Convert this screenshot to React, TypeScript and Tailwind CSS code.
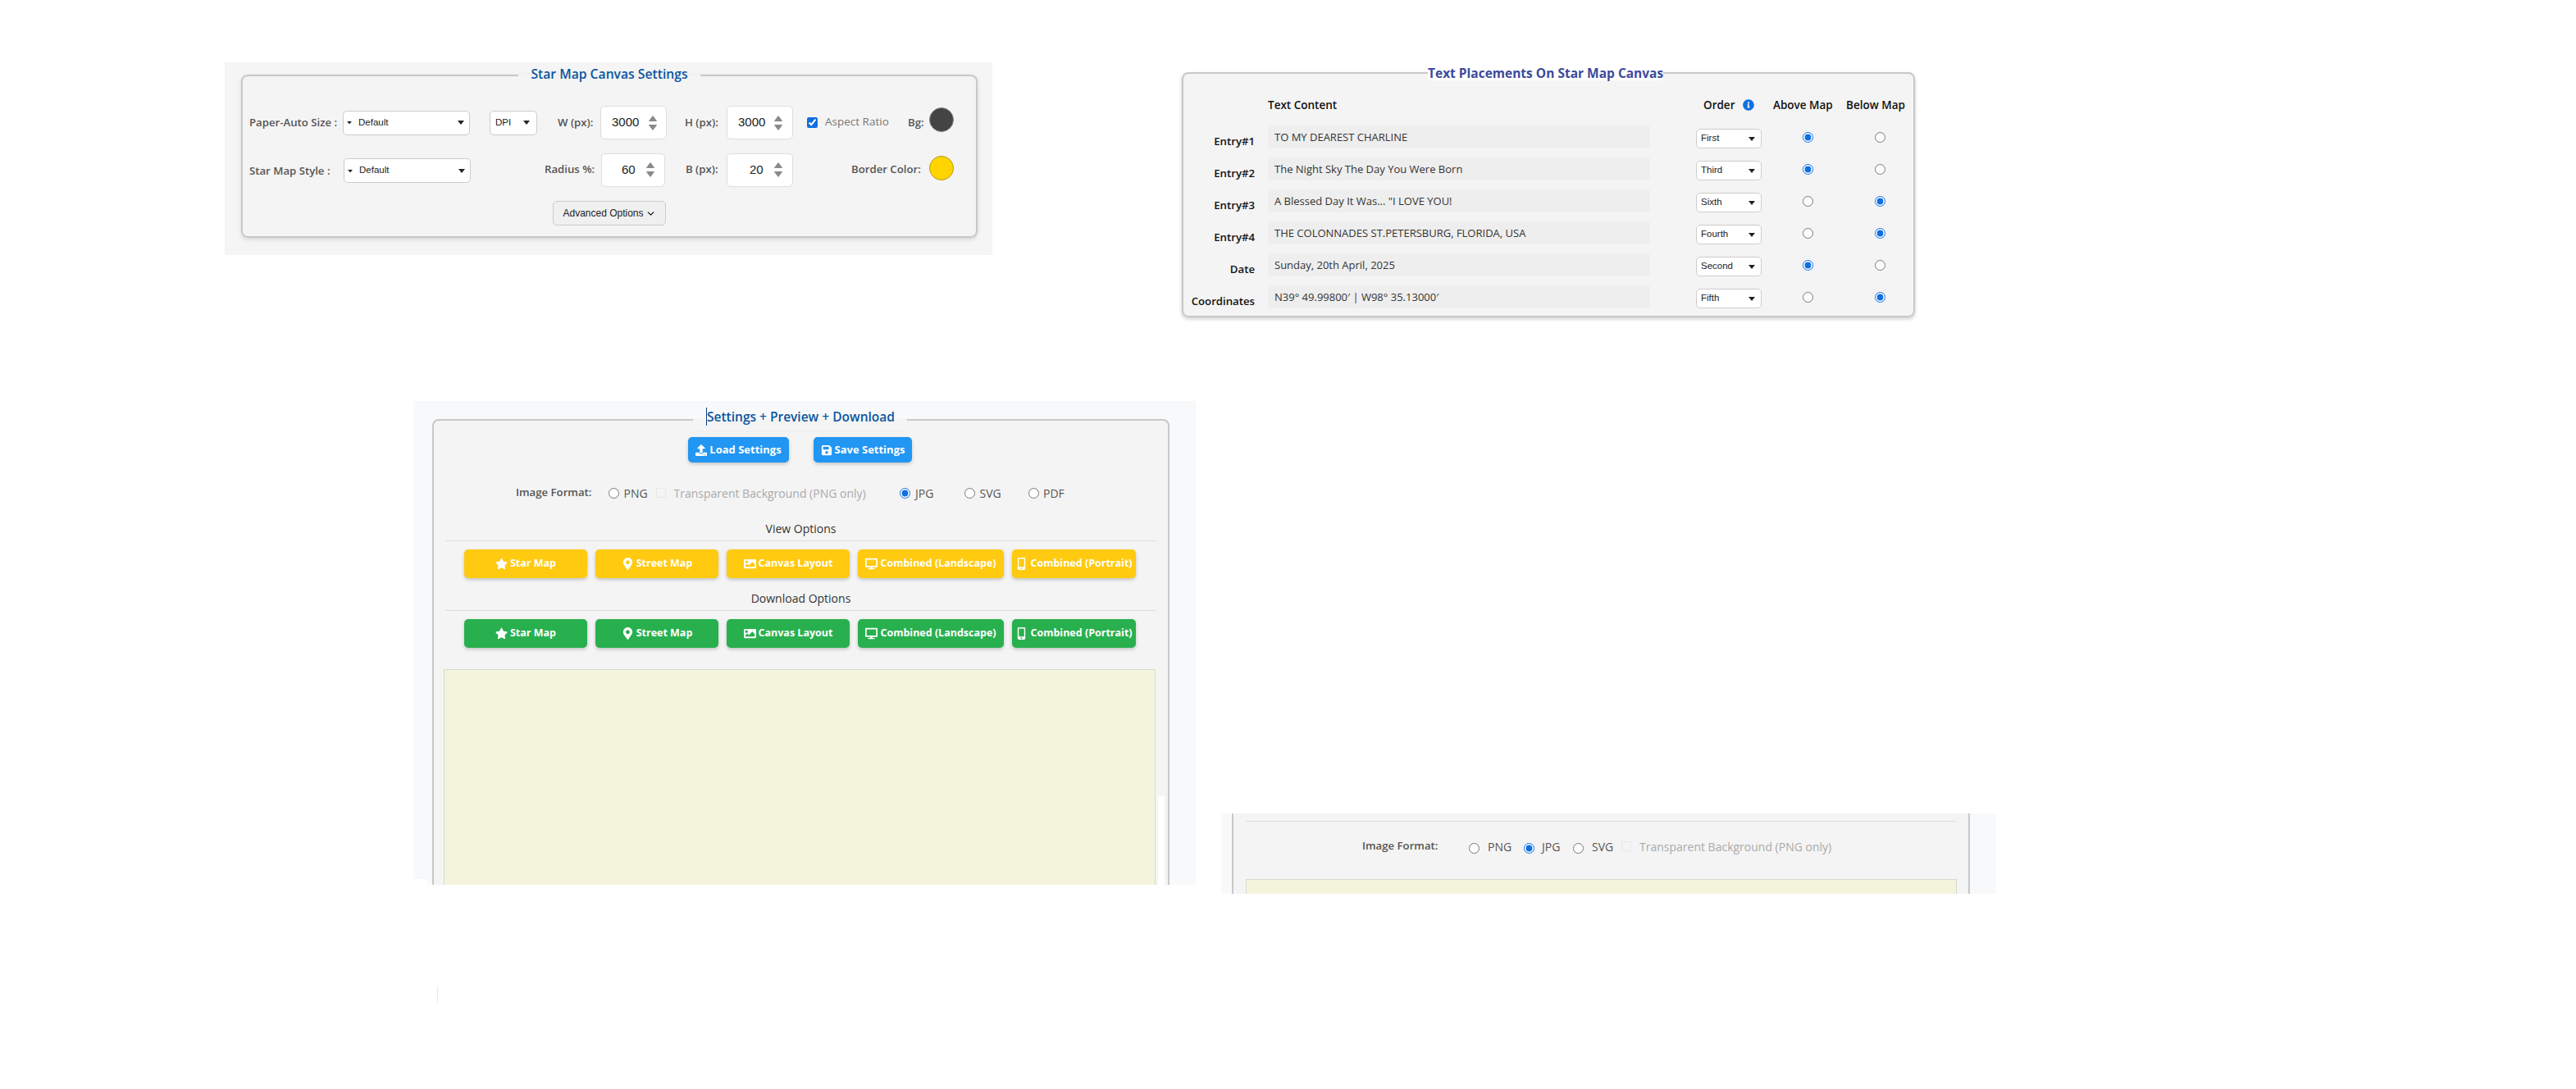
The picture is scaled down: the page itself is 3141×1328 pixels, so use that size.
import type { ReactNode } from 'react'
import { ChevronDown } from 'lucide-react'
import { FaDesktop, FaImage, FaInfoCircle, FaMapMarkerAlt, FaMobileAlt, FaSave, FaStar, FaUpload } from 'react-icons/fa'

function Caret({ className = '' }: { className?: string }) {
  return (
    <svg viewBox="0 0 8 5" className={`h-[5px] w-[8px] shrink-0 ${className}`}>
      <path d="M0 0h8L4 5z" fill="#222" />
    </svg>
  )
}

function FakeSelect({ text, className, lead }: { text: string; className: string; lead?: boolean }) {
  return (
    <div className={`flex shrink-0 items-center rounded-[5px] border border-[#ccc] bg-white font-['Liberation_Sans',sans-serif] text-[11.5px] text-[#222] ${className}`}>
      {lead && <Caret className="mr-[7px] scale-75" />}
      <span>{text}</span>
      <Caret className="ml-auto" />
    </div>
  )
}

function Spinner({ value, className }: { value: string; className: string }) {
  return (
    <div className={`flex h-[41px] shrink-0 items-center justify-between rounded-[5px] border border-[#ddd] bg-white font-['Liberation_Sans',sans-serif] text-[15px] text-[#222] ${className}`}>
      <span>{value}</span>
      <svg viewBox="0 0 12 20" className="h-[20px] w-[12px]">
        <path d="M6 1.5 10.5 7.5H1.5zM6 18.5 1.5 12.5H10.5z" fill="#8a8a8a" stroke="#8a8a8a" strokeLinejoin="round" />
      </svg>
    </div>
  )
}

function Label({ children, className }: { children: ReactNode; className: string }) {
  return <span className={`shrink-0 text-[13.2px] font-semibold whitespace-nowrap text-[#555] ${className}`}>{children}</span>
}

function Radio({ name, checked, className = '' }: { name: string; checked?: boolean; className?: string }) {
  return <input type="radio" name={name} defaultChecked={checked} className={`h-[13px] w-[13px] shrink-0 accent-[#0f6fe0] ${className}`} />
}

function FadedBox({ className }: { className: string }) {
  return <input type="checkbox" disabled className={`h-[12px] w-[12px] shrink-0 appearance-none border border-[#e8e8e8] ${className}`} />
}

function CanvasSettings() {
  return (
    <div className="absolute top-[76px] left-[274px] h-[235px] w-[936px] bg-[#f5f5f5] pt-[4px] pl-[20px]">
      <fieldset className="h-[210px] w-[898px] rounded-[8px] border-2 border-[#c8c8c8] bg-[#f4f4f4] shadow-[0_2px_5px_rgba(0,0,0,0.12)]">
        <legend className="mx-auto px-[15px] text-[15.7px] leading-[24px] font-semibold text-[#0b559f]">
          <span className="relative -top-[2px]">Star Map Canvas Settings</span>
        </legend>
        <div className="mt-[25px] flex h-[41px] items-center pl-[8px]">
          <Label className="w-[114px]">Paper-Auto Size :</Label>
          <FakeSelect text="Default" lead className="h-[30px] w-[155px] pr-[6px] pl-[3px]" />
          <FakeSelect text="DPI" className="ml-[24px] h-[30px] w-[58px] pr-[8px] pl-[6px]" />
          <Label className="ml-[25px] w-[44px]">W (px):</Label>
          <Spinner value="3000" className="ml-[8px] w-[81px] pr-[10px] pl-[13px]" />
          <Label className="ml-[22px] w-[42px]">H (px):</Label>
          <Spinner value="3000" className="ml-[9px] w-[81px] pr-[11px] pl-[13px]" />
          <input type="checkbox" defaultChecked className="ml-[17px] h-[13px] w-[13px] shrink-0 accent-[#0f6fe0]" />
          <span className="ml-[9px] mb-[2px] w-[80px] shrink-0 text-[13.5px] whitespace-nowrap text-[#777]">Aspect Ratio</span>
          <Label className="ml-[21px] w-[19px]">Bg:</Label>
          <div className="mb-[8px] ml-[7px] h-[30px] w-[30px] shrink-0 rounded-full border border-[#888] bg-[#444]" />
        </div>
        <div className="mt-[16px] flex h-[42px] items-center pl-[8px]">
          <Label className="mt-[3px] w-[115px]">Star Map Style :</Label>
          <FakeSelect text="Default" lead className="mt-[2px] h-[30px] w-[155px] pr-[6px] pl-[3px]" />
          <Label className="ml-[90px] w-[61px]">Radius %:</Label>
          <Spinner value="60" className="ml-[8px] w-[78px] pr-[11px] pl-[24px]" />
          <Label className="ml-[25px] w-[41px]">B (px):</Label>
          <Spinner value="20" className="ml-[9px] w-[81px] pr-[11px] pl-[27px]" />
          <Label className="ml-[71px] w-[87px]">Border Color:</Label>
          <div className="mb-[4px] ml-[8px] h-[30px] w-[30px] shrink-0 rounded-full border border-[#b89a10] bg-[#ffd400]" />
        </div>
        <div className="mt-[17px] flex justify-center">
          <button className="flex h-[30px] w-[138px] items-center justify-center gap-[2px] rounded-[5px] border border-[#ccc] bg-[#f0f0f0] font-['Liberation_Sans',sans-serif] text-[12px] text-[#222]">
            Advanced Options <ChevronDown size={13} strokeWidth={2.5} />
          </button>
        </div>
      </fieldset>
    </div>
  )
}

const entries = [
  { label: 'Entry#1', text: 'TO MY DEAREST CHARLINE', order: 'First', above: true },
  { label: 'Entry#2', text: 'The Night Sky The Day You Were Born', order: 'Third', above: true },
  { label: 'Entry#3', text: 'A Blessed Day It Was... "I LOVE YOU!', order: 'Sixth', above: false },
  { label: 'Entry#4', text: 'THE COLONNADES ST.PETERSBURG, FLORIDA, USA', order: 'Fourth', above: false },
  { label: 'Date', text: 'Sunday, 20th April, 2025', order: 'Second', above: true },
  { label: 'Coordinates', text: 'N39° 49.99800′ | W98° 35.13000′', order: 'Fifth', above: false },
]

function TextPlacements() {
  return (
    <fieldset className="absolute top-[80px] left-[1441px] h-[307px] w-[894px] rounded-[8px] border-2 border-[#c8c8c8] bg-[#f4f4f4] shadow-[0_2px_4px_rgba(0,0,0,0.2)]">
      <legend className="ml-[298px] bg-white text-[15.5px] leading-[18px] font-bold whitespace-nowrap text-[#3c4a9c]">Text Placements On Star Map Canvas</legend>
      <div className="mt-[20px] flex h-[20px] items-center text-[13.5px] font-semibold whitespace-nowrap text-[#111]">
        <span className="ml-[103px] w-[522px]">Text Content</span>
        <span className="ml-[9px] w-[48px]">Order</span>
        <FaInfoCircle className="h-[14px] w-[14px] text-[#0f6fe0]" />
        <span className="ml-[23px] w-[89px]">Above Map</span>
        <span>Below Map</span>
      </div>
      <div className="mt-[15px] flex flex-col gap-[11px]">
        {entries.map((entry) => (
          <div key={entry.label} className="flex h-[28px] items-start">
            <span className="mt-[9px] w-[87px] text-right text-[13.2px] leading-[20px] font-semibold whitespace-nowrap text-[#111]">{entry.label}</span>
            <div className="ml-[16px] flex h-[28px] w-[466px] items-center rounded-[3px] bg-[#eeeeee] pt-[2px] pl-[8px] text-[13px] text-[#333]">{entry.text}</div>
            <FakeSelect text={entry.order} className="mt-[4px] ml-[56px] h-[24px] w-[80px] pr-[7px] pl-[5px]" />
            <div className="flex h-[28px] w-[112px] items-center justify-center">
              <Radio name={entry.label} checked={entry.above} />
            </div>
            <div className="flex h-[28px] w-[64px] items-center justify-center">
              <Radio name={entry.label} checked={!entry.above} />
            </div>
          </div>
        ))}
      </div>
    </fieldset>
  )
}

const actions = [
  { label: 'Star Map', icon: FaStar, width: 'w-[150px]' },
  { label: 'Street Map', icon: FaMapMarkerAlt, width: 'w-[150px]' },
  { label: 'Canvas Layout', icon: FaImage, width: 'w-[150px]' },
  { label: 'Combined (Landscape)', icon: FaDesktop, width: 'w-[178px]' },
  { label: 'Combined (Portrait)', icon: FaMobileAlt, width: 'w-[151px]' },
]

function ActionRow({ color }: { color: string }) {
  return (
    <div className="mt-[10px] flex gap-[10px] pl-[37px]">
      {actions.map(({ label, icon: Icon, width }) => (
        <button key={label} className={`flex h-[35px] items-center justify-center gap-[3px] rounded-[5px] text-[12.5px] font-bold whitespace-nowrap text-white shadow-[0_2px_4px_rgba(0,0,0,0.2)] ${width} ${color}`}>
          <Icon className="h-[15px] w-[15px] shrink-0" />
          {label}
        </button>
      ))}
    </div>
  )
}

function SectionTitle({ children, className }: { children: ReactNode; className: string }) {
  return <div className={`mx-[14px] border-b border-[#ddd] pb-[4px] text-center text-[14px] leading-[20px] font-medium text-[#333] ${className}`}>{children}</div>
}

function PreviewPanel() {
  return (
    <div className="absolute top-[489px] left-[504px] h-[590px] w-[954px] overflow-hidden bg-[#f8f9fa] pt-[8px] pl-[23px]">
      <fieldset className="h-[700px] w-[899px] rounded-[8px] border-2 border-[#c8c8c8] bg-[#f4f4f4]">
        <legend className="ml-[316px] h-[30px] w-[261px] border-b border-[#eee] px-[16px] text-[15.5px] leading-[22px] font-semibold whitespace-nowrap text-[#0b559f]">
          <span className="border-l border-[#0b3f7f]">Settings + Preview + Download</span>
        </legend>
        <div className="mt-[6px] flex justify-center gap-[30px] pr-[2px]">
          <button className="flex h-[31px] w-[123px] items-center justify-center gap-[3px] rounded-[5px] bg-[#2196f3] text-[13px] font-bold text-white shadow-[0_2px_4px_rgba(0,0,0,0.2)]">
            <FaUpload className="h-[14px] w-[14px]" /> Load Settings
          </button>
          <button className="flex h-[31px] w-[120px] items-center justify-center gap-[3px] rounded-[5px] bg-[#2196f3] text-[13px] font-bold text-white shadow-[0_2px_4px_rgba(0,0,0,0.2)]">
            <FaSave className="h-[14px] w-[14px]" /> Save Settings
          </button>
        </div>
        <div className="mt-[27px] flex h-[20px] items-center text-[14px] whitespace-nowrap">
          <Label className="ml-[100px] w-[94px]">Image Format:</Label>
          <Radio name="format-main" className="ml-[18.5px]" />
          <span className="ml-[6px] w-[29px] text-[#555]">PNG</span>
          <FadedBox className="ml-[10px]" />
          <span className="ml-[10px] w-[234px] text-[#aaa]">Transparent Background (PNG only)</span>
          <Radio name="format-main" checked className="ml-[41.5px]" />
          <span className="ml-[6px] w-[23px] text-[#555]">JPG</span>
          <Radio name="format-main" className="ml-[36.5px]" />
          <span className="ml-[6px] w-[26px] text-[#555]">SVG</span>
          <Radio name="format-main" className="ml-[33.5px]" />
          <span className="ml-[5px] text-[#555]">PDF</span>
        </div>
        <SectionTitle className="mt-[24px]">View Options</SectionTitle>
        <ActionRow color="bg-[#ffca10]" />
        <SectionTitle className="mt-[15px]">Download Options</SectionTitle>
        <ActionRow color="bg-[#28b04f]" />
        <div className="mt-[26px] mr-[15px] ml-[12px] h-[300px] border border-[#d8d8d0] bg-[#f4f4dc]" />
      </fieldset>
      <div className="absolute top-[481px] left-[908px] h-[109px] w-[8px] bg-white" />
      <div className="absolute bottom-0 left-0 h-[7px] w-[17px] bg-white" />
    </div>
  )
}

function LowerFormatPanel() {
  return (
    <div className="absolute top-[992px] left-[1489px] h-[98px] w-[945px] overflow-hidden bg-[#f8f9fa] pl-[13px]">
      <div className="h-full w-[900px] border-x-2 border-[#c8c8c8] bg-[#f4f4f4] pt-[9px]">
        <div className="mr-[14px] ml-[15px] border-b border-[#ddd]" />
        <div className="mt-[20px] flex h-[20px] items-center text-[14px] whitespace-nowrap">
          <Label className="ml-[157px] w-[94px]">Image Format:</Label>
          <Radio name="format-lower" className="mt-[5px] ml-[35.5px]" />
          <span className="ml-[10.5px] w-[28px] text-[#555]">PNG</span>
          <Radio name="format-lower" checked className="mt-[5px] ml-[15.5px]" />
          <span className="ml-[9.5px] w-[22px] text-[#555]">JPG</span>
          <Radio name="format-lower" className="mt-[5px] ml-[15.5px]" />
          <span className="ml-[10.5px] w-[26px] text-[#555]">SVG</span>
          <FadedBox className="ml-[10px]" />
          <span className="ml-[10px] text-[#aaa]">Transparent Background (PNG only)</span>
        </div>
        <div className="mt-[30px] mr-[14px] ml-[15px] h-[40px] border border-[#d8d8d0] bg-[#f4f4dc]" />
      </div>
    </div>
  )
}

export default function App() {
  return (
    <div className="relative h-[1328px] w-[3141px] overflow-hidden bg-white font-['Open_Sans',sans-serif]">
      <CanvasSettings />
      <TextPlacements />
      <PreviewPanel />
      <LowerFormatPanel />
      <div className="absolute top-[1203px] left-[533px] h-[20px] w-px bg-[#e8e8e8]" />
    </div>
  )
}
